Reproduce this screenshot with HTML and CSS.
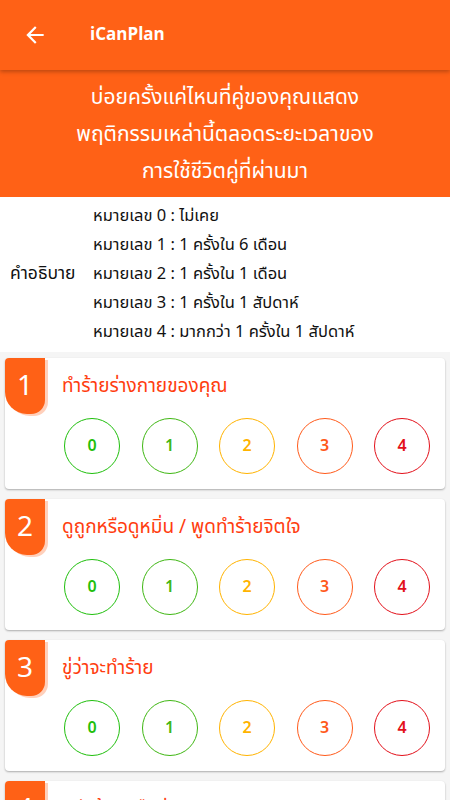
FILE: index.html
```html
<!DOCTYPE html>
<html lang="th">
<head>
  <meta charset="UTF-8">
  <title>iCanPlan</title>
  <link rel="stylesheet" href="styles.css">
</head>
<body>
  <div class="topbar">
    <svg class="back" width="26" height="26" viewBox="0 0 24 24">
      <path d="M20 11H7.83l5.59-5.59L12 4l-8 8 8 8 1.41-1.41L7.83 13H20v-2z" fill="#fff"/>
    </svg>
    <span class="appname">iCanPlan</span>
  </div>

  <div class="banner">
    บ่อยครั้งแค่ไหนที่คู่ของคุณแสดง<br>
    พฤติกรรมเหล่านี้ตลอดระยะเวลาของ<br>
    การใช้ชีวิตคู่ที่ผ่านมา
  </div>

  <div class="legend">
    <div class="legend-label">คำอธิบาย</div>
    <div class="legend-list">
      <div>หมายเลข 0 : ไม่เคย</div>
      <div>หมายเลข 1 : 1 ครั้งใน 6 เดือน</div>
      <div>หมายเลข 2 : 1 ครั้งใน 1 เดือน</div>
      <div>หมายเลข 3 : 1 ครั้งใน 1 สัปดาห์</div>
      <div>หมายเลข 4 : มากกว่า 1 ครั้งใน 1 สัปดาห์</div>
    </div>
  </div>

  <div class="questions" id="questions"></div>

  <script>
    const questions = [
      "ทำร้ายร่างกายของคุณ",
      "ดูถูกหรือดูหมิ่น / พูดทำร้ายจิตใจ",
      "ขู่ว่าจะทำร้าย",
      "กรีดร้องหรือด่าทอคุณ"
    ];
    const box = document.getElementById("questions");
    questions.forEach((q, i) => {
      const card = document.createElement("div");
      card.className = "card";
      let circles = "";
      for (let n = 0; n <= 4; n++) {
        circles += `<div class="choice c${n}">${n}</div>`;
      }
      card.innerHTML = `
        <div class="card-head">
          <div class="badge">${i + 1}</div>
          <div class="card-title">${q}</div>
        </div>
        <div class="choices">${circles}</div>
      `;
      box.appendChild(card);
    });
  </script>
</body>
</html>
```

FILE: styles.css
```css
body {
  margin: 0;
  background: #f5f5f5;
  font-family: "Noto Sans Thai", "Noto Sans", "DejaVu Sans", sans-serif;
  overflow: hidden;
}
.topbar {
  position: relative;
  z-index: 2;
  height: 70px;
  background: #ff6116;
  display: flex;
  align-items: center;
  box-shadow: 0 2px 4px rgba(0,0,0,0.25);
}
.back {
  margin-left: 22px;
}
.appname {
  margin-left: 42px;
  color: white;
  font-size: 17px;
  font-weight: bold;
}
.banner {
  background: #ff6116;
  color: white;
  text-align: center;
  font-size: 21px;
  line-height: 37px;
  padding: 9px 0 7px;
}
.legend {
  background: white;
  display: flex;
  align-items: center;
  padding: 4px 0 6px;
  font-size: 16.5px;
  color: #111;
}
.legend-label {
  width: 93px;
  padding-left: 10px;
  box-sizing: border-box;
  font-size: 17.5px;
}
.legend-list div {
  line-height: 29px;
}
.questions {
  padding: 6px 5px;
}
.card {
  background: white;
  border-radius: 4px;
  box-shadow: 0 1px 2px rgba(0,0,0,0.3);
  margin-bottom: 10px;
  padding-bottom: 15px;
}
.card-head {
  display: flex;
  align-items: center;
  height: 56px;
}
.badge {
  width: 40px;
  height: 56px;
  background: #ff6116;
  color: white;
  font-size: 28px;
  display: flex;
  align-items: center;
  justify-content: center;
  border-radius: 4px 0 14px 22px;
  box-shadow: 3px 2px 0 rgba(255,120,60,0.35);
}
.card-title {
  margin-left: 17px;
  color: #ff3d0f;
  font-size: 19px;
}
.choices {
  display: flex;
  justify-content: space-between;
  padding: 4px 15px 0 59px;
}
.choice {
  width: 54px;
  height: 54px;
  border: 1px solid;
  border-radius: 50%;
  display: flex;
  align-items: center;
  justify-content: center;
  font-size: 16px;
  font-weight: 600;
}
.c0 { color: #1fbf0c; border-color: #1fbf0c; }
.c1 { color: #3fb713; border-color: #3fb713; }
.c2 { color: #ffb300; border-color: #ffb300; }
.c3 { color: #ff5a1a; border-color: #ff5a1a; }
.c4 { color: #e3101a; border-color: #e3101a; }
```
